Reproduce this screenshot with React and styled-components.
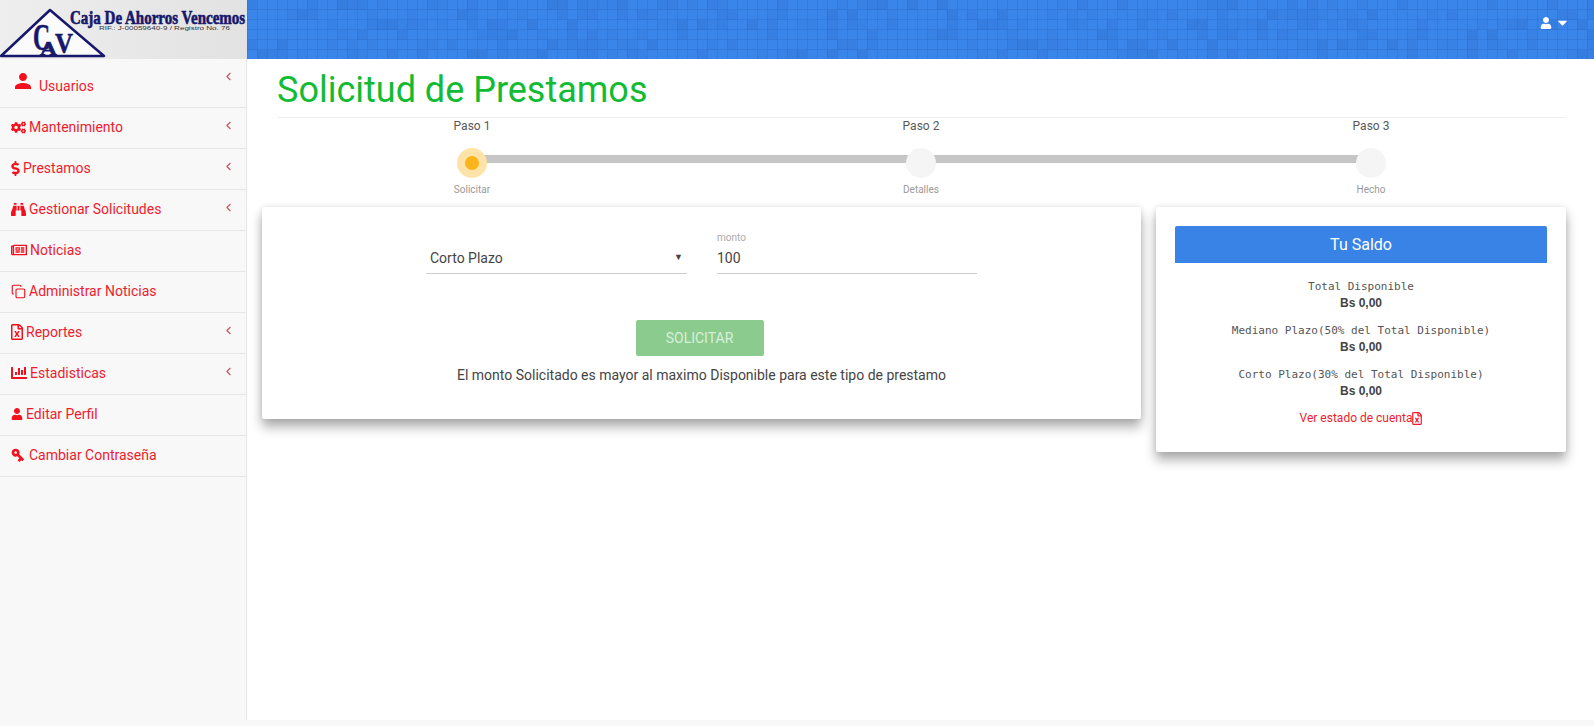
import React from "react";
import styled, { createGlobalStyle } from "styled-components";
import {
  FaUser, FaCogs, FaDollarSign, FaBinoculars, FaRegNewspaper,
  FaRegFileExcel, FaChartBar, FaCaretDown,
} from "react-icons/fa";
import { MdPerson, MdVpnKey } from "react-icons/md";
import { ChevronLeft, Copy } from "lucide-react";

const Global = createGlobalStyle`
  * { box-sizing: border-box; }
  html, body { margin: 0; height: 100%; background: #f8f8f8; }
  body { font-family: Roboto, "Liberation Sans", sans-serif; color: #444; }
`;

const Shell = styled.div`
  width: 1594px;
  height: 726px;
  display: flex;
  flex-direction: column;
  overflow: hidden;
`;

const Navbar = styled.header`
  height: 59px;
  flex: none;
  display: flex;
  position: relative;
  background: #3a85ea;
`;

const TilesSvg = styled.svg`
  position: absolute;
  inset: 0;
  width: 100%;
  height: 100%;
`;

const Brand = styled.div`
  width: 247px;
  height: 59px;
  position: relative;
  background: linear-gradient(90deg, #eeeeee, #e2e2e2);
  overflow: hidden;
  z-index: 1;
`;

const LogoSvg = styled.svg`
  display: block;
`;

const UserMenu = styled.div`
  margin-left: auto;
  padding: 15px 24px 0 0;
  height: 30px;
  display: flex;
  align-items: center;
  gap: 3px;
  color: #fff;
  position: relative;
`;

const Body = styled.div`
  display: flex;
  flex: none;
  height: 661px;
`;

const Sidebar = styled.nav`
  width: 247px;
  flex: none;
  background: #f8f8f8;
  border-right: 1px solid #e7e7e7;
`;

const Row = styled.a`
  display: flex;
  align-items: ${(p) => (p.$big ? "flex-end" : "center")};
  height: ${(p) => (p.$big ? "49px" : "41px")};
  padding: ${(p) => (p.$big ? "0 15px 13px 11px" : "0 15px 2px 11px")};
  gap: ${(p) => (p.$big ? "4px" : "3px")};
  color: #ee1c2e;
  font-size: 14px;
  border-bottom: 1px solid #e7e7e7;
  position: relative;
  svg { flex: none; color: #f40f1c; }
`;

const Chevron = styled(ChevronLeft)`
  position: absolute;
  right: 11px;
  top: 11px;
  width: 13px;
  height: 13px;
  stroke-width: 2;
  && { color: #c8505e; }
`;

const DollarIcon = styled(FaDollarSign)`
  width: 9px;
  height: 15px;
`;

const FileIcon = styled(FaRegFileExcel)`
  width: 12px;
  height: 16px;
`;

const KeyIcon = styled(MdVpnKey)`
  width: 16px;
  height: 16px;
  margin-left: -1px;
  transform: rotate(45deg);
`;

const PersonIcon = styled(MdPerson)`
  width: 24px;
  height: 24px;
  margin-bottom: 1px;
`;

const Content = styled.main`
  flex: 1;
  background: #fff;
  padding: 0 28px 0 15px;
  min-width: 0;
`;

const Heading = styled.div`
  margin-left: 15px;
  height: 59px;
  border-bottom: 1px solid #eee;
`;

const Title = styled.h1`
  margin: 0;
  padding-top: 10px;
  font-size: 36px;
  line-height: 42px;
  font-weight: 400;
  color: #12bb33;
`;

const Stepper = styled.div`
  height: 89px;
  padding-left: 180px;
  display: grid;
  grid-template-columns: 449px 450px 60px;
`;

const Step = styled.div`
  width: 60px;
  display: flex;
  flex-direction: column;
  align-items: center;
  position: relative;
`;

const StepTitle = styled.span`
  font-size: 12px;
  line-height: 14px;
  margin-top: 1px;
  color: #595959;
`;

const Dot = styled.span`
  width: 30px;
  height: 30px;
  margin-top: 15px;
  border-radius: 50%;
  display: flex;
  align-items: center;
  justify-content: center;
  position: relative;
  z-index: 1;
  background: ${(p) => (p.$active ? "#fde3a7" : "#f5f5f5")};
  &::after {
    content: "";
    width: 14px;
    height: 14px;
    border-radius: 50%;
    background: ${(p) => (p.$active ? "#fbb41a" : "transparent")};
  }
`;

const StepLine = styled.span`
  position: absolute;
  top: 37px;
  left: 30px;
  width: 449px;
  height: 8px;
  background: #c6c6c6;
`;

const StepCaption = styled.span`
  margin-top: 5px;
  font-size: 10px;
  line-height: 14px;
  color: #9a9a9a;
`;

const Cards = styled.div`
  display: flex;
  align-items: flex-start;
  gap: 15px;
`;

const Card = styled.section`
  background: #fff;
  border-radius: 2px;
  box-shadow: 0 8px 12px rgba(0, 0, 0, 0.32), 0 0 6px rgba(0, 0, 0, 0.1);
`;

const FormCard = styled(Card)`
  width: 879px;
  height: 212px;
  padding-top: 25px;
  display: flex;
  flex-direction: column;
  align-items: center;
`;

const Fields = styled.div`
  display: grid;
  grid-template-columns: 261px 260px;
  gap: 30px;
  align-items: end;
`;

const FieldLabel = styled.label`
  display: block;
  font-size: 10px;
  line-height: 12px;
  color: #aaa;
`;

const SelectWrap = styled.div`
  position: relative;
  &::after {
    content: "▼";
    position: absolute;
    right: 4px;
    top: 9px;
    font-size: 9px;
    line-height: 12px;
    color: #444;
  }
`;

const Select = styled.select`
  appearance: none;
  display: block;
  width: 100%;
  height: 32px;
  padding: 0 4px;
  border: 0;
  border-bottom: 1px solid #ccc;
  border-radius: 0;
  background: transparent;
  font: 14px Roboto, sans-serif;
  color: #444;
`;

const Input = styled.input`
  display: block;
  width: 100%;
  height: 30px;
  padding: 0 0 2px;
  border: 0;
  border-bottom: 1px solid #ccc;
  background: transparent;
  font: 14px Roboto, sans-serif;
  color: #444;
`;

const Submit = styled.button`
  width: 128px;
  height: 36px;
  margin: 46px 4px 0 0;
  border: 0;
  border-radius: 2px;
  background: #8bcb8e;
  color: #d8f0d9;
  font: 14px Roboto, sans-serif;
  text-transform: uppercase;
`;

const Message = styled.p`
  margin: 11px 0 0;
  font-size: 14px;
  line-height: 16px;
  color: #444;
`;

const SaldoCard = styled(Card)`
  width: 410px;
  height: 245px;
  padding: 19px;
  text-align: center;
`;

const SaldoHead = styled.div`
  height: 37px;
  border-radius: 2px 2px 0 0;
  background: #3a83e6;
  color: #fff;
  font-size: 16px;
  line-height: 37px;
  margin-bottom: 16px;
`;

const Amount = styled.div`
  margin-bottom: 13px;
`;

const MonoLabel = styled.div`
  font-family: "DejaVu Sans Mono", monospace;
  font-size: 11px;
  line-height: 15px;
  color: #555;
`;

const Value = styled.div`
  font-family: "Liberation Sans", Arial, sans-serif;
  font-weight: 700;
  font-size: 12px;
  line-height: 14px;
  margin-top: 2px;
  color: #444;
`;

const Statement = styled.a`
  display: flex;
  justify-content: center;
  align-items: center;
  color: #ee1c2e;
  font-size: 12px;
  line-height: 14px;
  svg { width: 10px; height: 13px; }
`;

// navbar tiles: same darker squares each render
const tiles = [];
let seed = 7;
for (let y = 0; y < 6; y++) {
  for (let x = 0; x < 136; x++) {
    seed = (seed * 73 + 41) % 1009;
    if (seed % 3 === 0) tiles.push({ x, y, o: 0.04 + (seed % 5) * 0.02 });
  }
}

function Tiles() {
  return (
    <TilesSvg aria-hidden="true">
      {tiles.map((t) => (
        <rect key={t.x + "-" + t.y} x={247 + t.x * 10} y={t.y * 10} width="10" height="10" fill="#1c4f9c" opacity={t.o} />
      ))}
      {Array.from({ length: 136 }, (_, i) => (
        <rect key={"v" + i} x={247 + i * 10} y="0" width="1" height="59" fill="#2c6cc6" opacity="0.4" />
      ))}
      {Array.from({ length: 6 }, (_, i) => (
        <rect key={"h" + i} x="247" y={i * 10 + 9} width="1347" height="1" fill="#2c6cc6" opacity="0.4" />
      ))}
    </TilesSvg>
  );
}

function Logo() {
  return (
    <LogoSvg width="247" height="59" viewBox="0 0 247 59">
      <path d="M1 56 L50 10 L104 56 Z" fill="#fbfbfb" stroke="#17186b" strokeWidth="2.5" strokeLinejoin="round" />
      <g fontFamily="Liberation Serif" fontWeight="700" fill="#17186b" stroke="#17186b" strokeWidth="0.6">
        <text transform="translate(33 50) scale(0.62 1)" fontSize="38">C</text>
        <text transform="translate(40 54.5) scale(1.3 1)" fontSize="18">A</text>
        <text transform="translate(55 52.5) scale(0.83 1)" fontSize="30">V</text>
        <text transform="translate(70 24) scale(0.834 1)" fontSize="18">Caja De Ahorros Vencemos</text>
      </g>
      <text x="99" y="30" fontFamily="Liberation Sans" fontSize="5.5" fill="#333" textLength="131" lengthAdjust="spacingAndGlyphs">RIF.: J-00059640-9 / Registro No. 76</text>
    </LogoSvg>
  );
}

const menu = [
  { label: "Usuarios", icon: <PersonIcon />, sub: true, big: true },
  { label: "Mantenimiento", icon: <FaCogs size={15} />, sub: true },
  { label: "Prestamos", icon: <DollarIcon />, sub: true },
  { label: "Gestionar Solicitudes", icon: <FaBinoculars size={15} />, sub: true },
  { label: "Noticias", icon: <FaRegNewspaper size={16} /> },
  { label: "Administrar Noticias", icon: <Copy size={15} strokeWidth={1.8} /> },
  { label: "Reportes", icon: <FileIcon />, sub: true },
  { label: "Estadisticas", icon: <FaChartBar size={16} />, sub: true },
  { label: "Editar Perfil", icon: <FaUser size={12} /> },
  { label: "Cambiar Contraseña", icon: <KeyIcon /> },
];

const steps = [
  { title: "Paso 1", caption: "Solicitar", active: true, line: true },
  { title: "Paso 2", caption: "Detalles", line: true },
  { title: "Paso 3", caption: "Hecho" },
];

const saldos = [
  "Total Disponible",
  "Mediano Plazo(50% del Total Disponible)",
  "Corto Plazo(30% del Total Disponible)",
];

export default function App() {
  return (
    <Shell>
      <Global />
      <Navbar>
        <Tiles />
        <Brand>
          <Logo />
        </Brand>
        <UserMenu>
          <FaUser size={12} />
          <FaCaretDown size={15} />
        </UserMenu>
      </Navbar>
      <Body>
        <Sidebar>
          {menu.map((m) => (
            <Row key={m.label} $big={m.big}>
              {m.icon}
              <span>{m.label}</span>
              {m.sub && <Chevron />}
            </Row>
          ))}
        </Sidebar>
        <Content>
          <Heading>
            <Title>Solicitud de Prestamos</Title>
          </Heading>
          <Stepper>
            {steps.map((s) => (
              <Step key={s.title}>
                <StepTitle>{s.title}</StepTitle>
                <Dot $active={s.active} />
                {s.line && <StepLine />}
                <StepCaption>{s.caption}</StepCaption>
              </Step>
            ))}
          </Stepper>
          <Cards>
            <FormCard>
              <Fields>
                <SelectWrap>
                  <Select defaultValue="corto">
                    <option value="corto">Corto Plazo</option>
                    <option value="mediano">Mediano Plazo</option>
                  </Select>
                </SelectWrap>
                <div>
                  <FieldLabel>monto</FieldLabel>
                  <Input defaultValue="100" />
                </div>
              </Fields>
              <Submit disabled>Solicitar</Submit>
              <Message>El monto Solicitado es mayor al maximo Disponible para este tipo de prestamo</Message>
            </FormCard>
            <SaldoCard>
              <SaldoHead>Tu Saldo</SaldoHead>
              {saldos.map((s) => (
                <Amount key={s}>
                  <MonoLabel>{s}</MonoLabel>
                  <Value>Bs 0,00</Value>
                </Amount>
              ))}
              <Statement>
                Ver estado de cuenta
                <FaRegFileExcel />
              </Statement>
            </SaldoCard>
          </Cards>
        </Content>
      </Body>
    </Shell>
  );
}
